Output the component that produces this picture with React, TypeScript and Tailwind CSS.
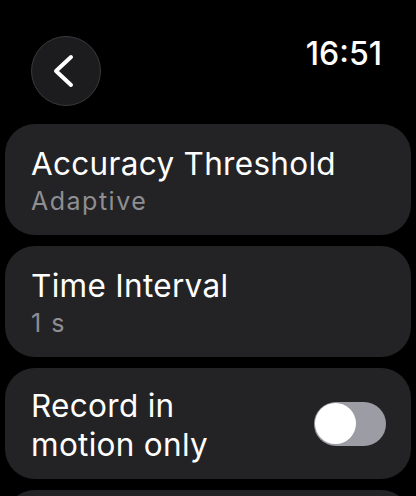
import React from "react";

const font = { fontFamily: "Inter, 'Noto Sans', sans-serif" };

function BackButton() {
  return (
    <button className="flex h-[70px] w-[70px] items-center justify-center rounded-full border-[1.5px] border-[#3a3a3c] bg-[#1c1c1e]">
      <svg width="24" height="34" viewBox="0 0 24 34" fill="none" className="ml-[-6px]">
        <path d="M20 3 L5 17 L20 31" stroke="white" strokeWidth="4" strokeLinecap="round" strokeLinejoin="round" />
      </svg>
    </button>
  );
}

function Toggle() {
  return (
    <div className="relative h-[44px] w-[72px] shrink-0 rounded-full bg-[#9c9ca4]">
      <div className="absolute left-[1px] top-[1.5px] h-[41px] w-[41px] rounded-full bg-white" />
    </div>
  );
}

function ValueRow({ title, value }: { title: string; value: string }) {
  return (
    <div className="flex h-[111px] flex-col justify-center rounded-[30px] bg-[#232325] pl-[26px] pr-4 pt-[4px]">
      <div className="text-[31.5px] leading-[38px] tracking-[0.3px] text-white">{title}</div>
      <div className="mt-[1px] text-[25px] leading-[34px] tracking-[1.5px] text-[#8e8e93]">{value}</div>
    </div>
  );
}

export default function App() {
  return (
    <div className="h-[496px] w-[416px] overflow-hidden bg-black" style={font}>
      <div className="flex items-start justify-between pl-[31px] pr-[34px] pt-[36px]">
        <BackButton />
        <div className="mt-[-2px] text-[32px] font-medium leading-[40px] text-white">16:51</div>
      </div>
      <div className="mt-[18px] flex flex-col gap-[11px] px-[5px]">
        <ValueRow title="Accuracy Threshold" value="Adaptive" />
        <ValueRow title="Time Interval" value="1 s" />
        <div className="flex h-[111px] items-center justify-between rounded-[30px] bg-[#232325] pl-[26px] pr-[25px]">
          <div className="pt-[3px] text-[31.5px] leading-[39px] tracking-[0.3px] text-white">
            Record in
            <br />
            motion only
          </div>
          <Toggle />
        </div>
        <div className="h-[111px] rounded-[30px] bg-[#232325]" />
      </div>
    </div>
  );
}
